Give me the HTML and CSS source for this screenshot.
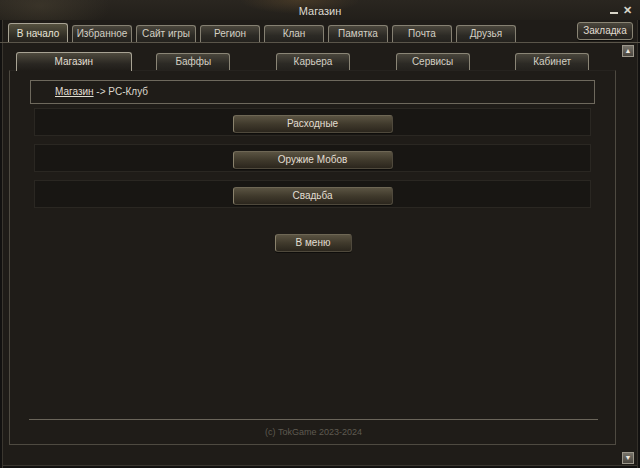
FILE: index.html
```html
<!DOCTYPE html>
<html lang="ru">
<head>
  <meta charset="UTF-8">
  <title>Магазин</title>
  <link rel="stylesheet" href="styles.css">
</head>
<body>
  <div class="window">
    <div class="titlebar">
      <span class="title">Магазин</span>
      <div class="winctl">
        <span class="min"></span>
        <span class="close">✕</span>
      </div>
    </div>

    <div class="tabbar">
      <div class="tabs">
        <div class="tab active">В начало</div>
        <div class="tab">Избранное</div>
        <div class="tab">Сайт игры</div>
        <div class="tab">Регион</div>
        <div class="tab">Клан</div>
        <div class="tab">Памятка</div>
        <div class="tab">Почта</div>
        <div class="tab">Друзья</div>
      </div>
      <div class="btn bookmark">Закладка</div>
    </div>

    <div class="body">
      <div class="pane">
        <div class="subtabs">
          <div class="subtab active">Магазин</div>
          <div class="subtab">Баффы</div>
          <div class="subtab">Карьера</div>
          <div class="subtab">Сервисы</div>
          <div class="subtab">Кабинет</div>
        </div>

        <div class="frame">
          <div class="crumbs"><a href="#">Магазин</a> -&gt; PC-Клуб</div>

          <div class="rows">
            <div class="row"><div class="btn wide">Расходные</div></div>
            <div class="row"><div class="btn wide">Оружие Мобов</div></div>
            <div class="row"><div class="btn wide">Свадьба</div></div>
          </div>

          <div class="menu-wrap"><div class="btn menu">В меню</div></div>

          <div class="footer">(c) TokGame 2023-2024</div>
        </div>
      </div>

      <div class="scrollbar">
        <span class="arrow">&#9650;</span>
        <span class="arrow">&#9660;</span>
      </div>
    </div>
  </div>
</body>
</html>
```

FILE: styles.css
```css
body {
  margin: 0;
  background: #141210;
  font-family: "Liberation Sans", Arial, sans-serif;
  font-size: 10px;
  color: #dcd8cc;
}
.window {
  width: 640px;
  height: 468px;
  overflow: hidden;
  background: #1f1c18;
  box-shadow: inset 2px 0 0 #121110, inset 3px 0 0 #3a362f, inset -2px 0 0 #121110, inset -3px 0 0 #34302a, inset 0 -2px 0 #121110, inset 0 -3px 0 #3a362f;
  display: flex;
  flex-direction: column;
}

/* title */
.titlebar {
  height: 20px;
  position: relative;
  display: flex;
  justify-content: center;
  align-items: center;
  background:
    radial-gradient(ellipse 60px 14px at 300px 0, rgba(120,90,50,0.35), transparent),
    radial-gradient(ellipse 70px 30px at 40px 6px, rgba(90,80,60,0.35), transparent),
    linear-gradient(#2a2620, #221f1a);
}
.title {
  font-size: 11px;
  color: #dedad0;
  padding-top: 2px;
}
.winctl {
  position: absolute;
  right: 8px;
  top: 5px;
  display: flex;
  align-items: flex-end;
  gap: 5px;
}
.winctl .min {
  width: 8px;
  height: 2px;
  background: #d8d4c8;
  margin-bottom: 2px;
}
.winctl .close {
  font-size: 11px;
  line-height: 11px;
  color: #d8d4c8;
  font-weight: bold;
}

/* top tabs */
.tabbar {
  height: 22px;
  display: flex;
  align-items: flex-end;
  padding: 0 7px 0 8px;
  border-bottom: 1px solid #5a554a;
}
.tabs {
  display: flex;
  gap: 4px;
  align-items: flex-end;
}
.tab {
  width: 58px;
  height: 16px;
  line-height: 16px;
  text-align: center;
  color: #d4d0c4;
  border: 1px solid #858072;
  border-bottom: none;
  border-radius: 3px 3px 0 0;
  background: linear-gradient(#4a463c, #2c2a25 60%, #24221e);
  white-space: nowrap;
}
.tab.active {
  height: 18px;
  line-height: 19px;
  border-color: #a8a394;
  background: linear-gradient(#55513f, #2f2c24 70%, #26231e);
  color: #e8e4d8;
}
.btn {
  text-align: center;
  color: #e2ded2;
  border: 1px solid #4f493c;
  border-left-color: #8a826c;
  border-top-color: #6e6755;
  border-radius: 3px;
  background: linear-gradient(#5a5342, #403a2c 50%, #2b261d);
  box-shadow: 0 1px 0 #0e0d0b;
  white-space: nowrap;
}
.bookmark {
  margin-left: auto;
  align-self: flex-start;
  margin-top: 2px;
  width: 54px;
  height: 16px;
  line-height: 16px;
  background: linear-gradient(#4b473d, #2e2b25 60%, #26231f);
  border-color: #8a8575;
}

/* body */
.body {
  flex: 1;
  display: flex;
}
.pane {
  width: 622px;
  display: flex;
  flex-direction: column;
}
.subtabs {
  margin: 9px 0 0 14px;
  width: 598px;
  height: 18px;
  display: grid;
  grid-template-columns: repeat(5, 1fr);
  justify-items: center;
  align-items: end;
  position: relative;
  z-index: 1;
}
.subtab {
  width: 72px;
  height: 16px;
  line-height: 16px;
  text-align: center;
  color: #d4d0c4;
  border: 1px solid #8a8576;
  border-bottom: none;
  border-radius: 3px 3px 0 0;
  background: linear-gradient(#4a463c, #2c2a25 60%, #24221e);
}
.subtab.active {
  width: 114px;
  height: 18px;
  line-height: 18px;
  margin-bottom: -1px;
  border-color: #a8a394;
  background: linear-gradient(#4e4a3e, #2a2722 60%, #1f1c18);
  color: #e2ded2;
}

.frame {
  margin: 0 5px 0 9px;
  height: 373px;
  border: 1px solid #4e4a41;
  border-top-color: #26231f;
  display: flex;
  flex-direction: column;
}
.crumbs {
  margin: 9px 20px 0 20px;
  height: 22px;
  line-height: 22px;
  padding-left: 24px;
  border: 1px solid #6e695d;
  color: #dcd8cc;
}
.crumbs a {
  color: #e2ded2;
  text-decoration: underline;
}

.rows {
  margin: 4px 24px 0 24px;
  display: flex;
  flex-direction: column;
  gap: 8px;
}
.row {
  height: 20px;
  padding-top: 6px;
  background: #181613;
  border: 1px solid #2a2722;
  display: flex;
  justify-content: center;
}
.btn.wide {
  width: 158px;
  height: 16px;
  line-height: 16px;
}
.menu-wrap {
  margin-top: 26px;
  display: flex;
  justify-content: center;
  padding-left: 1px;
}
.btn.menu {
  width: 75px;
  height: 16px;
  line-height: 16px;
}
.footer {
  margin: auto 17px 0 19px;
  border-top: 1px solid #6a655a;
  height: 24px;
  line-height: 25px;
  text-align: center;
  font-size: 9px;
  color: #5e5a50;
}

/* scrollbar */
.scrollbar {
  width: 18px;
  display: flex;
  flex-direction: column;
  justify-content: space-between;
  align-items: flex-start;
  padding: 2px 0 4px 1px;
}
.arrow {
  width: 10px;
  height: 10px;
  line-height: 10px;
  font-size: 7px;
  text-align: center;
  color: #eeeae0;
  background: linear-gradient(#77736a, #4a463f);
  border: 1px solid #9c978b;
}
```
